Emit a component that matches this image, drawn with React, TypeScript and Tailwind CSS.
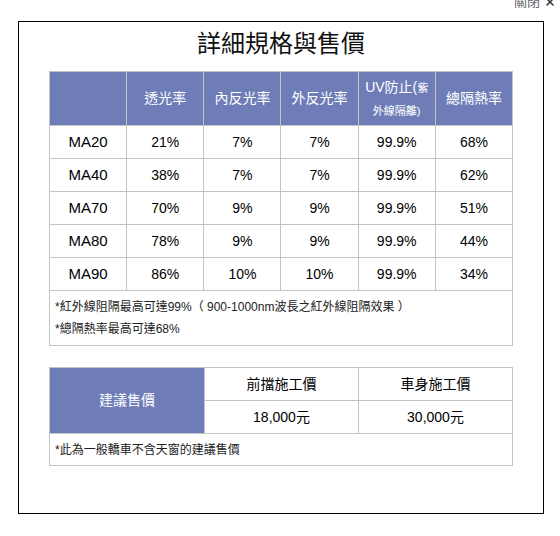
import { X } from "lucide-react";

const specs = [
  { model: "MA20", vlt: "21%", inner: "7%", outer: "7%", uv: "99.9%", tser: "68%" },
  { model: "MA40", vlt: "38%", inner: "7%", outer: "7%", uv: "99.9%", tser: "62%" },
  { model: "MA70", vlt: "70%", inner: "9%", outer: "9%", uv: "99.9%", tser: "51%" },
  { model: "MA80", vlt: "78%", inner: "9%", outer: "9%", uv: "99.9%", tser: "44%" },
  { model: "MA90", vlt: "86%", inner: "10%", outer: "10%", uv: "99.9%", tser: "34%" },
];

const cell = "border border-[#c4c4c4] text-center align-middle";
const head = "border border-[#c4c4c4] bg-[#6e7db8] text-white font-normal text-center align-middle";

export default function App() {
  return (
    <div className="w-[560px] h-[536px] bg-white text-black font-['Liberation_Sans','Noto_Sans_CJK_TC',sans-serif]">
      {/* close link, mostly scrolled off the top */}
      <div className="h-[21px] flex justify-end items-start pr-[4px]">
        <div className="-mt-[6px] flex items-center gap-[4px] text-[13px] text-[#666] leading-[16px]">
          <span>關閉</span>
          <X size={12} strokeWidth={3} className="text-[#333]" />
        </div>
      </div>

      <div className="ml-[18px] w-[526px] h-[493px] border border-black px-[30px]">
        <h2 className="h-[44px] leading-[44px] text-[24px] text-center text-[#111] mb-[5px]">
          詳細規格與售價
        </h2>

        <table className="table-fixed w-[464px] border-collapse text-[14px]">
          <thead>
            <tr className="h-[54px]">
              <th className={head}></th>
              <th className={head}>透光率</th>
              <th className={head}>內反光率</th>
              <th className={head}>外反光率</th>
              <th className={head + " leading-[22px]"}>
                UV防止(<span className="text-[11px]">紫</span>
                <br />
                <span className="text-[11px]">外線隔離)</span>
              </th>
              <th className={head}>總隔熱率</th>
            </tr>
          </thead>
          <tbody>
            {specs.map((s) => (
              <tr key={s.model} className="h-[33px]">
                <td className={cell + " text-[15px]"}>{s.model}</td>
                <td className={cell}>{s.vlt}</td>
                <td className={cell}>{s.inner}</td>
                <td className={cell}>{s.outer}</td>
                <td className={cell}>{s.uv}</td>
                <td className={cell}>{s.tser}</td>
              </tr>
            ))}
            <tr>
              <td colSpan={6} className="border border-[#c4c4c4] px-[5px] py-[5px] text-[12px] leading-[22px] text-[#222]">
                <div>*紅外線阻隔最高可達99%（ 900-1000nm波長之紅外線阻隔效果 ）</div>
                <div>*總隔熱率最高可達68%</div>
              </td>
            </tr>
          </tbody>
        </table>

        <table className="table-fixed w-[464px] border-collapse text-[14px] mt-[21px]">
          <tbody>
            <tr className="h-[33px]">
              <td rowSpan={2} className={head + " w-[155px]"}>建議售價</td>
              <td className={cell}>前擋施工價</td>
              <td className={cell}>車身施工價</td>
            </tr>
            <tr className="h-[33px]">
              <td className={cell}>18,000元</td>
              <td className={cell}>30,000元</td>
            </tr>
            <tr className="h-[32px]">
              <td colSpan={3} className="border border-[#c4c4c4] px-[5px] text-[12px] text-[#222]">
                *此為一般轎車不含天窗的建議售價
              </td>
            </tr>
          </tbody>
        </table>
      </div>
    </div>
  );
}
